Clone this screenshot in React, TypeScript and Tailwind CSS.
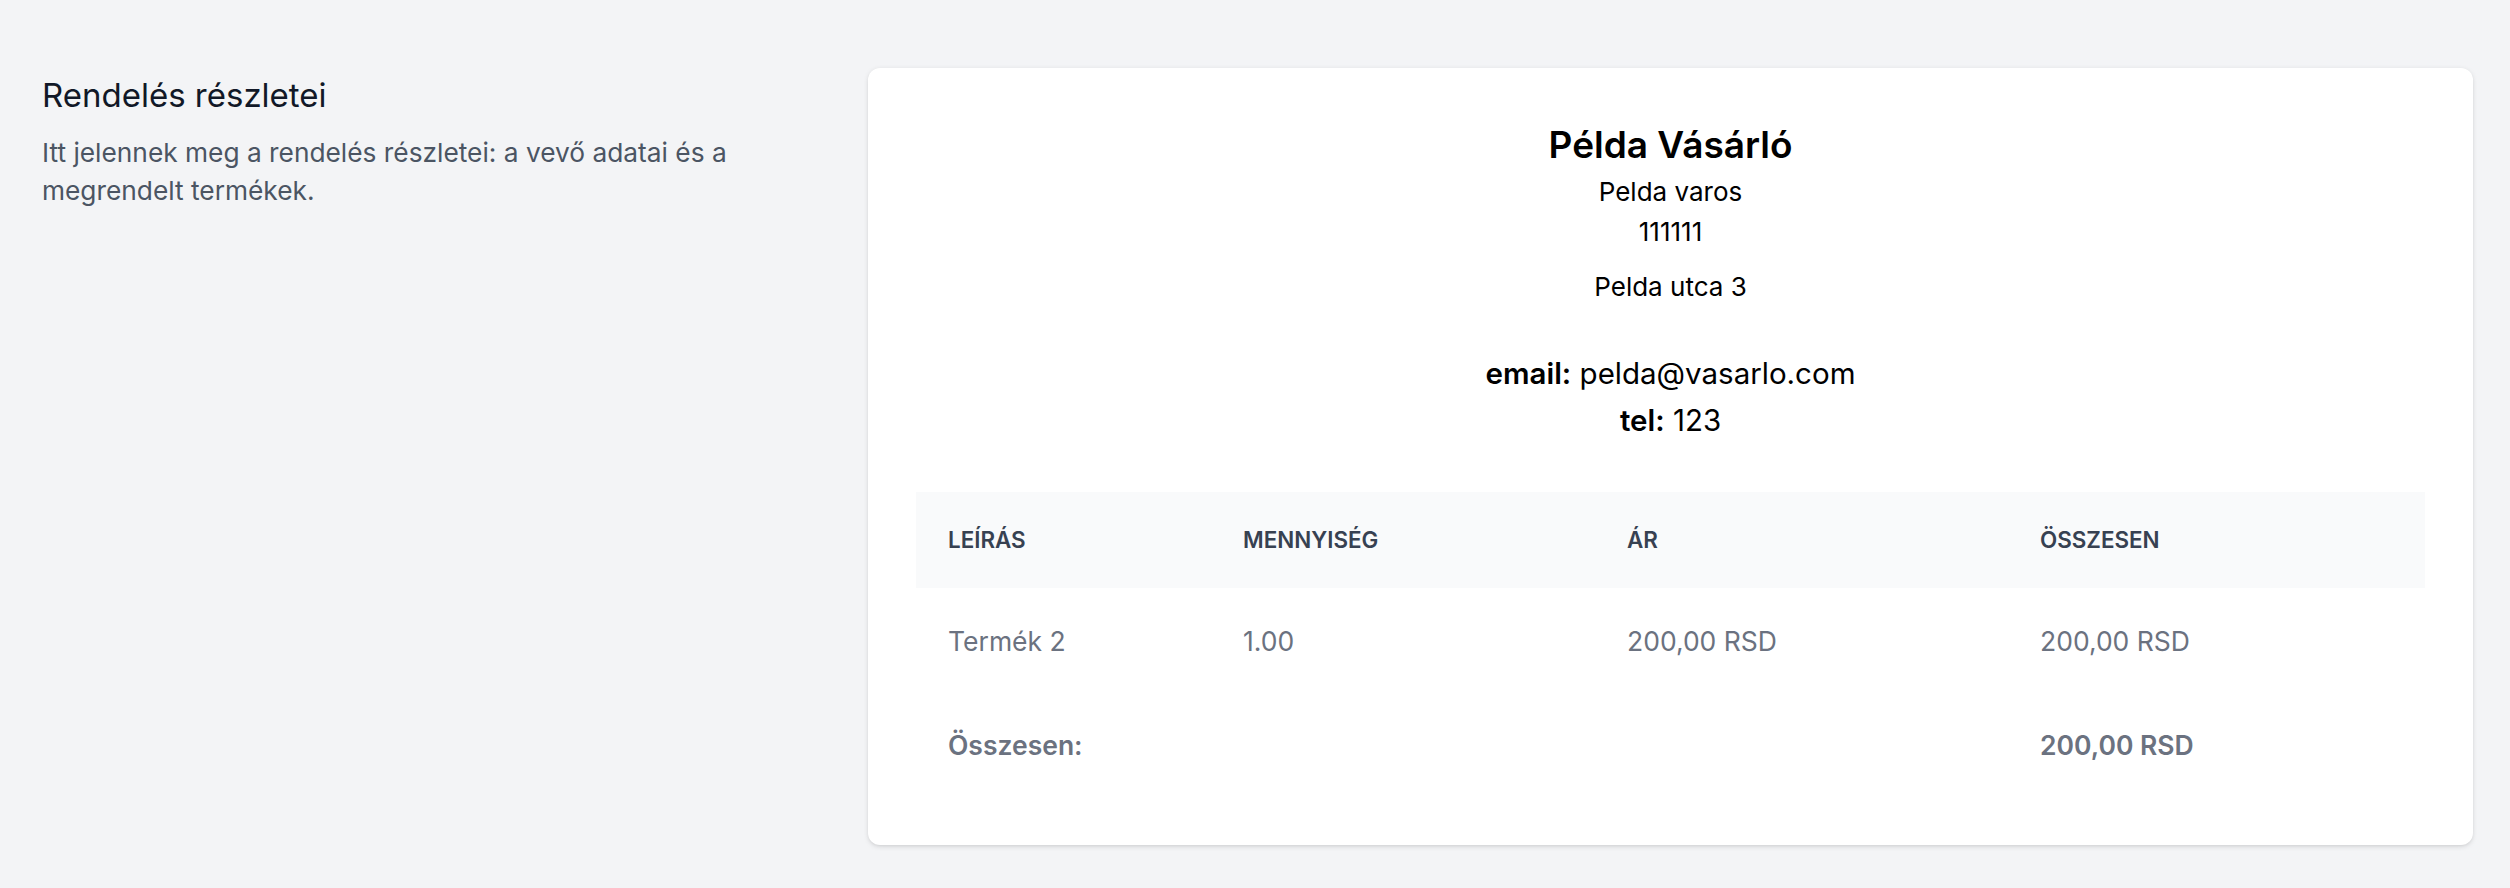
const items = [{ name: 'Termék 2', qty: '1.00', price: '200,00 RSD', total: '200,00 RSD' }];

export default function App() {
  return (
    <div className="min-h-screen bg-[#f3f4f6] font-['Inter','Noto_Sans',sans-serif]">
      <div className="grid grid-cols-[786px_1605px] gap-x-[40px] pl-[42px] pt-[68px]">
        <div className="pt-[5px]">
          <h3 className="text-[33px] leading-[44.8px] text-[#111827]">Rendelés részletei</h3>
          <p className="mt-[16px] text-[26.3px] leading-[38.4px] text-[#4b5563]">
            Itt jelennek meg a rendelés részletei: a vevő adatai és a megrendelt termékek.
          </p>
        </div>

        <div className="rounded-[12px] bg-white px-[48px] pt-[53px] pb-[48px] shadow-[0_1.6px_4.8px_rgba(0,0,0,0.1),0_1.6px_3.2px_-1.6px_rgba(0,0,0,0.1)]">
          <div className="text-center text-black">
            <h2 className="text-[37px] leading-[48px] font-semibold">Példa Vásárló</h2>
            <p className="mt-[3px] text-[26px] leading-[40px]">Pelda varos</p>
            <p className="text-[26px] leading-[40px]">111111</p>
            <p className="mt-[15px] text-[26px] leading-[40px]">Pelda utca 3</p>
            <p className="mt-[43px] text-[29.5px] leading-[47px]">
              <span className="font-semibold">email:</span> pelda@vasarlo.com
            </p>
            <p className="text-[29.5px] leading-[47px]">
              <span className="font-semibold">tel:</span> 123
            </p>
          </div>

          <table className="mt-[48px] w-full table-fixed text-left">
            <thead className="bg-[#f9fafb]">
              <tr className="text-[22.4px] leading-[32px] uppercase text-[#374151]">
                <th className="w-[295px] px-[32px] py-[32px] font-semibold">Leírás</th>
                <th className="w-[384px] px-[32px] py-[32px] font-semibold">Mennyiség</th>
                <th className="w-[413px] px-[32px] py-[32px] font-semibold">Ár</th>
                <th className="px-[32px] py-[32px] font-semibold">Összesen</th>
              </tr>
            </thead>
            <tbody className="text-[26.5px] leading-[38.4px] text-[#6b7280]">
              {items.map((it) => (
                <tr key={it.name}>
                  <td className="px-[32px] pt-[34px] pb-[32px]">{it.name}</td>
                  <td className="px-[32px] pt-[34px] pb-[32px]">{it.qty}</td>
                  <td className="px-[32px] pt-[34px] pb-[32px]">{it.price}</td>
                  <td className="px-[32px] pt-[34px] pb-[32px]">{it.total}</td>
                </tr>
              ))}
              <tr className="font-semibold">
                <td className="px-[32px] pt-[34px] pb-[32px]">Összesen:</td>
                <td className="px-[32px] pt-[34px] pb-[32px]"></td>
                <td className="px-[32px] pt-[34px] pb-[32px]"></td>
                <td className="px-[32px] pt-[34px] pb-[32px]">200,00 RSD</td>
              </tr>
            </tbody>
          </table>
        </div>
      </div>
    </div>
  );
}
